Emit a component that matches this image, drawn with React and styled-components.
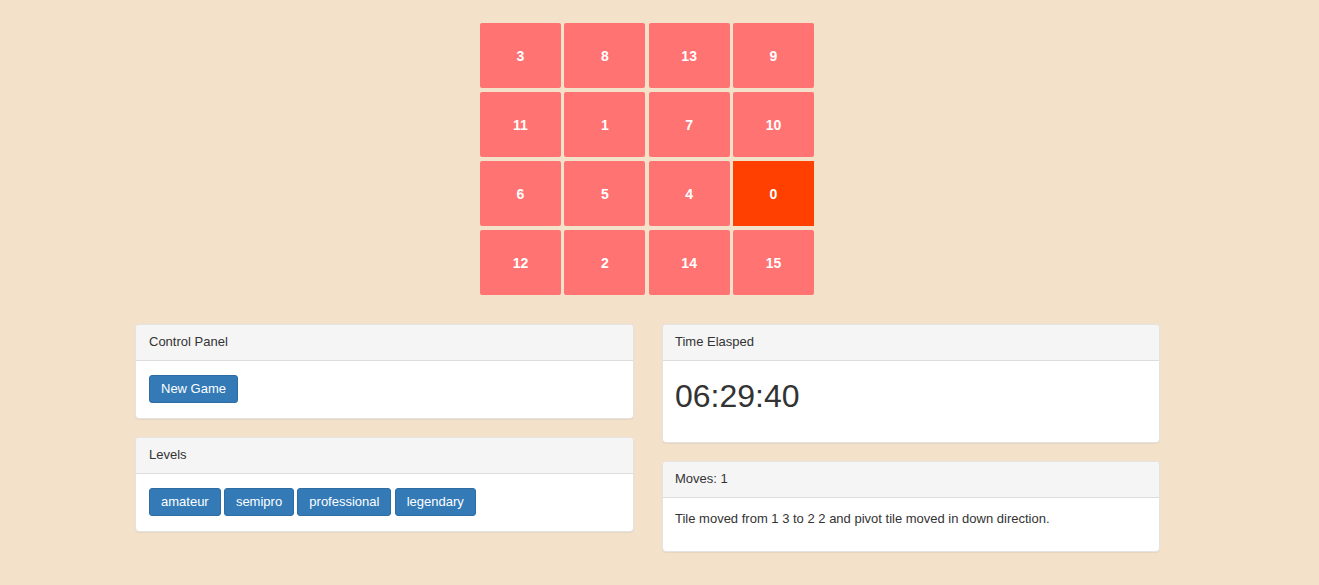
import React from 'react';
import styled, { createGlobalStyle, css } from 'styled-components';

const GlobalStyle = createGlobalStyle`
  html, body {
    margin: 0;
    padding: 0;
    background: #f3e1c9;
  }
  body {
    font-family: "Liberation Sans", Arial, sans-serif;
    font-size: 13px;
    color: #333;
  }
`;

const board = [
  [3, 8, 13, 9],
  [11, 1, 7, 10],
  [6, 5, 4, 0],
  [12, 2, 14, 15],
];

const levels = ['amateur', 'semipro', 'professional', 'legendary'];

const Page = styled.div`
  min-height: 585px;
  padding-top: 23px;
  box-sizing: border-box;
`;

const BoardGrid = styled.div`
  display: grid;
  grid-template-columns: repeat(4, 81px);
  grid-auto-rows: 65px;
  column-gap: 3.33px;
  row-gap: 4px;
  width: 334px;
  margin-left: 480px;
`;

const Tile = styled.div`
  display: flex;
  align-items: center;
  justify-content: center;
  background: #ff7373;
  color: #fff;
  font-weight: bold;
  font-size: 14px;
  border-radius: 2px;
  ${(p) =>
    p.$pivot &&
    css`
      background: #ff4000;
      border-radius: 0;
    `}
`;

const Columns = styled.div`
  display: flex;
  gap: 28px;
  margin: 29px 0 0 135px;
  width: 1025px;
`;

const Column = styled.div`
  flex: 0 0 ${(p) => p.$width}px;
  display: flex;
  flex-direction: column;
  gap: ${(p) => p.$gap}px;
  --inset: ${(p) => p.$inset}px;
`;

const Panel = styled.div`
  background: #fff;
  border: 1px solid #e3e3e3;
  border-radius: 4px;
  box-shadow: 0 1px 1px rgba(0, 0, 0, 0.05);
  overflow: hidden;
`;

const PanelHeading = styled.div`
  background: #f5f5f5;
  border-bottom: 1px solid #ddd;
  padding: 8px var(--inset) 9px;
  line-height: 18px;
  font-size: 13px;
  color: #333;
`;

const PanelBody = styled.div`
  padding: ${(p) => p.$top || 14}px var(--inset) ${(p) => p.$bottom || 15}px;
`;

const Button = styled.button`
  font-family: inherit;
  font-size: 13px;
  line-height: 18px;
  padding: 4px 11px;
  color: #fff;
  background: #337ab7;
  border: 1px solid #2e6da4;
  border-radius: 3px;
  cursor: pointer;
`;

const ButtonRow = styled.div`
  display: flex;
  gap: 3.2px;
`;

const Timer = styled.div`
  font-size: 32px;
  line-height: 42px;
  padding-bottom: 10px;
  color: #333;
`;

const Message = styled.p`
  margin: 0;
  line-height: 18px;
`;

export default function App() {
  return (
    <Page>
      <GlobalStyle />
      <BoardGrid>
        {board.flat().map((n) => (
          <Tile key={n} $pivot={n === 0}>
            {n}
          </Tile>
        ))}
      </BoardGrid>
      <Columns>
        <Column $width={499} $gap={18} $inset={13}>
          <Panel>
            <PanelHeading>Control Panel</PanelHeading>
            <PanelBody>
              <Button>New Game</Button>
            </PanelBody>
          </Panel>
          <Panel>
            <PanelHeading>Levels</PanelHeading>
            <PanelBody>
              <ButtonRow>
                {levels.map((l) => (
                  <Button key={l}>{l}</Button>
                ))}
              </ButtonRow>
            </PanelBody>
          </Panel>
        </Column>
        <Column $width={498} $gap={18} $inset={12}>
          <Panel>
            <PanelHeading>Time Elasped</PanelHeading>
            <PanelBody>
              <Timer>06:29:40</Timer>
            </PanelBody>
          </Panel>
          <Panel>
            <PanelHeading>Moves: 1</PanelHeading>
            <PanelBody $top={12} $bottom={23}>
              <Message>Tile moved from 1 3 to 2 2 and pivot tile moved in down direction.</Message>
            </PanelBody>
          </Panel>
        </Column>
      </Columns>
    </Page>
  );
}
